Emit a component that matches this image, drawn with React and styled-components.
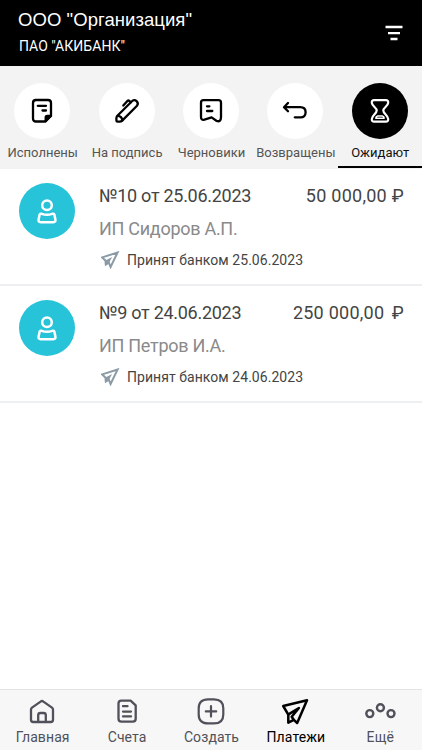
import React,{useState} from "react";
import styled,{createGlobalStyle} from "styled-components";

const GlobalStyle = createGlobalStyle`
    *{
        box-sizing:border-box;
    }
    body{
        margin:0;
        background:#fff;
        font-family:Roboto, "Liberation Sans", sans-serif;
    }
    button{
        border:0;
        padding:0;
        background:none;
        font-family:inherit;
        cursor:pointer;
    }
    svg{
        display:block;
        flex:none;
    }
`;

const Screen = styled.div`
    display:flex;
    flex-direction:column;
    width:422px;
    height:750px;
    background:#fff;
    overflow:hidden;
`;

const Header = styled.header`
    display:flex;
    justify-content:space-between;
    height:66px;
    padding:8px 19px 0 18px;
    background:#000;
    color:#fff;
`;

const Company = styled.h1`
    margin:0;
    font:400 18.5px/24px "Liberation Sans", Arial, sans-serif;
    letter-spacing:0.06px;
    white-space:nowrap;
`;

const Bank = styled.p`
    margin:4px 0 0 1px;
    font-size:14px;
    line-height:21px;
    letter-spacing:0.05px;
    white-space:nowrap;
`;

const FilterButton = styled.button`
    align-self:flex-start;
    margin-top:17px;
`;

const Tabs = styled.nav`
    display:grid;
    grid-template-columns:repeat(5, 84.4px);
    height:103px;
    background:#f3f3f3;
`;

const Tab = styled.button`
    display:flex;
    flex-direction:column;
    align-items:center;
    height:102px;
    padding-top:17px;
    border-bottom:2px solid ${p => p.$active ? "#000" : "transparent"};
    color:${p => p.$active ? "#111" : "#555"};
`;

const TabCircle = styled.span`
    display:flex;
    align-items:center;
    justify-content:center;
    width:56px;
    height:56px;
    border-radius:50%;
    background:${p => p.$active ? "#000" : "#fff"};
    color:${p => p.$active ? "#fff" : "#000"};
`;

const TabLabel = styled.span`
    margin-top:5px;
    padding-left:1px;
    font-size:13px;
    line-height:18px;
    white-space:nowrap;
`;

const List = styled.main`
    flex:1;
`;

const Payment = styled.article`
    display:flex;
    height:117px;
    padding:14px 18px 0 19px;
    border-bottom:2px solid #eeeff1;
`;

const Avatar = styled.div`
    display:flex;
    align-items:center;
    justify-content:center;
    width:56px;
    height:56px;
    border-radius:50%;
    background:#26c3d9;
    color:#fff;
`;

const Details = styled.div`
    flex:1;
    margin-left:24px;
`;

const TopLine = styled.div`
    display:flex;
    justify-content:space-between;
    color:#444;
    font-size:18px;
    line-height:26px;
    white-space:nowrap;
`;

const Number = styled.span`
    letter-spacing:-0.28px;
`;

const Amount = styled.span`
    letter-spacing:0.25px;
`;

const Currency = styled.span`
    margin-left:${p => p.$gap}px;
    letter-spacing:0.4px;
`;

const Payee = styled.div`
    margin-top:8px;
    color:#8a8a8a;
    font-size:18px;
    line-height:24px;
    letter-spacing:-0.28px;
    white-space:nowrap;
`;

const Status = styled.div`
    display:flex;
    align-items:center;
    gap:7px;
    height:20px;
    margin:9px 0 0 2px;
    color:#444;
    font-size:14px;
    line-height:20px;
    letter-spacing:0.05px;
    white-space:nowrap;
`;

const BottomNav = styled.nav`
    display:grid;
    grid-template-columns:repeat(5, 84.4px);
    height:61px;
    border-top:1px solid #e2e2e2;
    background:#f7f7f7;
`;

const NavItem = styled.button`
    display:flex;
    flex-direction:column;
    align-items:center;
    padding-top:7px;
    color:${p => p.$active ? "#000" : "#50515a"};
`;

const NavLabel = styled.span`
    padding-left:1px;
    font-size:14px;
    line-height:20px;
    letter-spacing:0.1px;
    white-space:nowrap;
`;

function Icon({size = 30, width = 2, children}){
    return(
        <svg width={size} height={size} viewBox={`0 0 ${size} ${size}`} fill="none" stroke="currentColor"
            strokeWidth={width} strokeLinecap="round" strokeLinejoin="round">
            {children}
        </svg>
    );
}

const DoneIcon = () => (
    <Icon width={2.3}>
        <path d="M8.5 4H21Q24 4 24 7V19.5L18.5 25.5H9Q6 25.5 6 22.5V7Q6 4 9 4"/>
        <path d="M18.7 25V21.5Q18.7 20 20.2 20H24Z" fill="currentColor"/>
        <path d="M10.8 9.8H19M15.5 14.5H19"/>
    </Icon>
);

const PenIcon = () => (
    <Icon width={2.3}>
        <path d="M4.4 22.2Q4.4 20.8 5.4 19.7L20.2 5Q22.4 3.1 24.6 5.2T25 9.8L10.2 24.6Q9.1 25.7 7.7 25.7H5.6Q4.4 25.7 4.4 24.5Z"/>
        <path d="M5.7 19.8Q9.9 20 10.3 24.3M11.3 9.6L15.4 5Q16.4 4 17.5 5.1L18.6 6.3"/>
    </Icon>
);

const DraftIcon = () => (
    <Icon width={2.3}>
        <path d="M7 4.2H22.5Q25 4.2 25 6.7V21Q25 26.3 20.7 25L15.6 21.4L8.4 23.7Q5 24.5 5 21V6.7Q5 4.2 7.5 4.2"/>
        <path d="M11 10.3H13.4M11 15H16.3"/>
    </Icon>
);

const ReturnIcon = () => (
    <Icon width={2.3}>
        <path d="M8 7L4 11.2L8 15.2M4.4 11.2H20.2Q25.6 11.2 25.6 16.3T20.2 21.3H14.8"/>
    </Icon>
);

const HourglassIcon = () => (
    <Icon width={2.2}>
        <path d="M9.2 4.2H20.8Q23.4 4.2 23.2 6.8C22.8 10.5 18.3 11.5 18.3 14.5S22.8 19 23.2 23Q23.4 25.6 20.8 25.6H9.2Q6.6 25.6 6.8 23C7.2 19 11.7 17.5 11.7 14.5S7.2 10.5 6.8 6.8Q6.6 4.2 9.2 4.2Z"/>
        <path d="M10.8 22.2Q11 20.4 12.6 20H17.4Q19 20.4 19.2 22.2Z" strokeWidth="1.5"/>
    </Icon>
);

const PersonIcon = () => (
    <Icon width={2.5}>
        <circle cx="15" cy="9.2" r="4.8"/>
        <path d="M8.6 17.8H9.8Q15 19.8 20.2 17.8H21.4Q22.2 17.8 22.4 18.8L23.4 23.6Q23.8 26.2 21.4 26.2H8.6Q6.2 26.2 6.6 23.6L7.6 18.8Q7.8 17.8 8.6 17.8Z"/>
    </Icon>
);

const SentIcon = () => (
    <svg width="19" height="18" viewBox="0 0 19 18" fill="none" stroke="#8a9ba6" strokeWidth="2">
        <path d="M1.2 6.4L16.6 1.5L9.6 16L7.8 11.6L4.8 13.6L4.4 9.4Z"/>
        <path d="M4.4 9.4L11.2 6L8 11.8L4.8 13.6Z" fill="#8a9ba6" stroke="none"/>
    </svg>
);

const HomeIcon = () => (
    <Icon width={2.3}>
        <path d="M4 12.7Q4 11.4 5 10.6L13.6 4.6Q15 3.5 16.4 4.6L25 10.6Q26 11.4 26 12.7V22.8Q26 25 23.8 25H6.2Q4 25 4 22.8Z"/>
        <path d="M11.2 24.5V18.3Q11.2 16 13.4 16H16.6Q18.8 16 18.8 18.3V24.5"/>
    </Icon>
);

const AccountsIcon = () => (
    <Icon width={2.3}>
        <path d="M9.3 3.6H18.6L23.7 8.4V21.8Q23.7 24.6 20.9 24.6H9.3Q6.5 24.6 6.5 21.8V6.4Q6.5 3.6 9.3 3.6Z"/>
        <path d="M11 9.2H15.5M11 14.6H19M11 19.4H19"/>
    </Icon>
);

const CreateIcon = () => (
    <Icon width={2.2}>
        <path d="M12 2.4H18Q27.3 2.4 27.3 11.4V17.4Q27.3 26.4 18 26.4H12Q2.7 26.4 2.7 17.4V11.4Q2.7 2.4 12 2.4Z"/>
        <path d="M15 9.2V19.6M9.8 14.4H20.2"/>
    </Icon>
);

const PaymentsIcon = () => (
    <Icon width={2.5}>
        <path d="M3.2 9L27 3.3L17.2 26L13.8 22.8L8.3 25.6V17.6Z"/>
        <path d="M8.5 17.4L18.9 11L11.7 19.8L13.7 22.8"/>
    </Icon>
);

const MoreIcon = () => (
    <svg width="32" height="30" viewBox="0 0 32 30" fill="none" stroke="currentColor" strokeWidth="2.4">
        <circle cx="5.8" cy="16.6" r="3.5"/>
        <circle cx="16.4" cy="10.7" r="3.5"/>
        <circle cx="27" cy="16.6" r="3.5"/>
    </svg>
);

const tabs = [
    {id:"done", label:"Исполнены", icon:DoneIcon},
    {id:"sign", label:"На подпись", icon:PenIcon},
    {id:"drafts", label:"Черновики", icon:DraftIcon},
    {id:"returned", label:"Возвращены", icon:ReturnIcon},
    {id:"waiting", label:"Ожидают", icon:HourglassIcon},
];

const payments = [
    {number:"10", date:"25.06.2023", amount:"50 000,00", gap:0, payee:"ИП Сидоров А.П."},
    {number:"9", date:"24.06.2023", amount:"250 000,00", gap:2.6, payee:"ИП Петров И.А."},
];

const menu = [
    {id:"home", label:"Главная", icon:HomeIcon},
    {id:"accounts", label:"Счета", icon:AccountsIcon},
    {id:"create", label:"Создать", icon:CreateIcon},
    {id:"payments", label:"Платежи", icon:PaymentsIcon},
    {id:"more", label:"Ещё", icon:MoreIcon},
];

export default function App(){
    const [tab,setTab] = useState("waiting");
    const [page,setPage] = useState("payments");

    return(
        <Screen>
            <GlobalStyle/>
            <Header>
                <div>
                    <Company>ООО "Организация"</Company>
                    <Bank>ПАО "АКИБАНК"</Bank>
                </div>
                <FilterButton>
                    <svg width="18" height="16" viewBox="0 0 18 16" fill="#fff">
                        <path d="M0.5 0.8H17.5V3.3H0.5ZM3 6.9H15V9.3H3ZM5.5 12.7H12.5V15.2H5.5Z"/>
                    </svg>
                </FilterButton>
            </Header>
            <Tabs>
                {tabs.map(({id,label,icon:TabIcon}) => (
                    <Tab key={id} $active={tab === id} onClick={() => setTab(id)}>
                        <TabCircle $active={tab === id}><TabIcon/></TabCircle>
                        <TabLabel>{label}</TabLabel>
                    </Tab>
                ))}
            </Tabs>
            <List>
                {payments.map((item) => (
                    <Payment key={item.number}>
                        <Avatar><PersonIcon/></Avatar>
                        <Details>
                            <TopLine>
                                <Number>№{item.number} от {item.date}</Number>
                                <Amount>{item.amount} <Currency $gap={item.gap}>₽</Currency></Amount>
                            </TopLine>
                            <Payee>{item.payee}</Payee>
                            <Status><SentIcon/>Принят банком {item.date}</Status>
                        </Details>
                    </Payment>
                ))}
            </List>
            <BottomNav>
                {menu.map(({id,label,icon:MenuIcon}) => (
                    <NavItem key={id} $active={page === id} onClick={() => setPage(id)}>
                        <MenuIcon/>
                        <NavLabel>{label}</NavLabel>
                    </NavItem>
                ))}
            </BottomNav>
        </Screen>
    );
};
